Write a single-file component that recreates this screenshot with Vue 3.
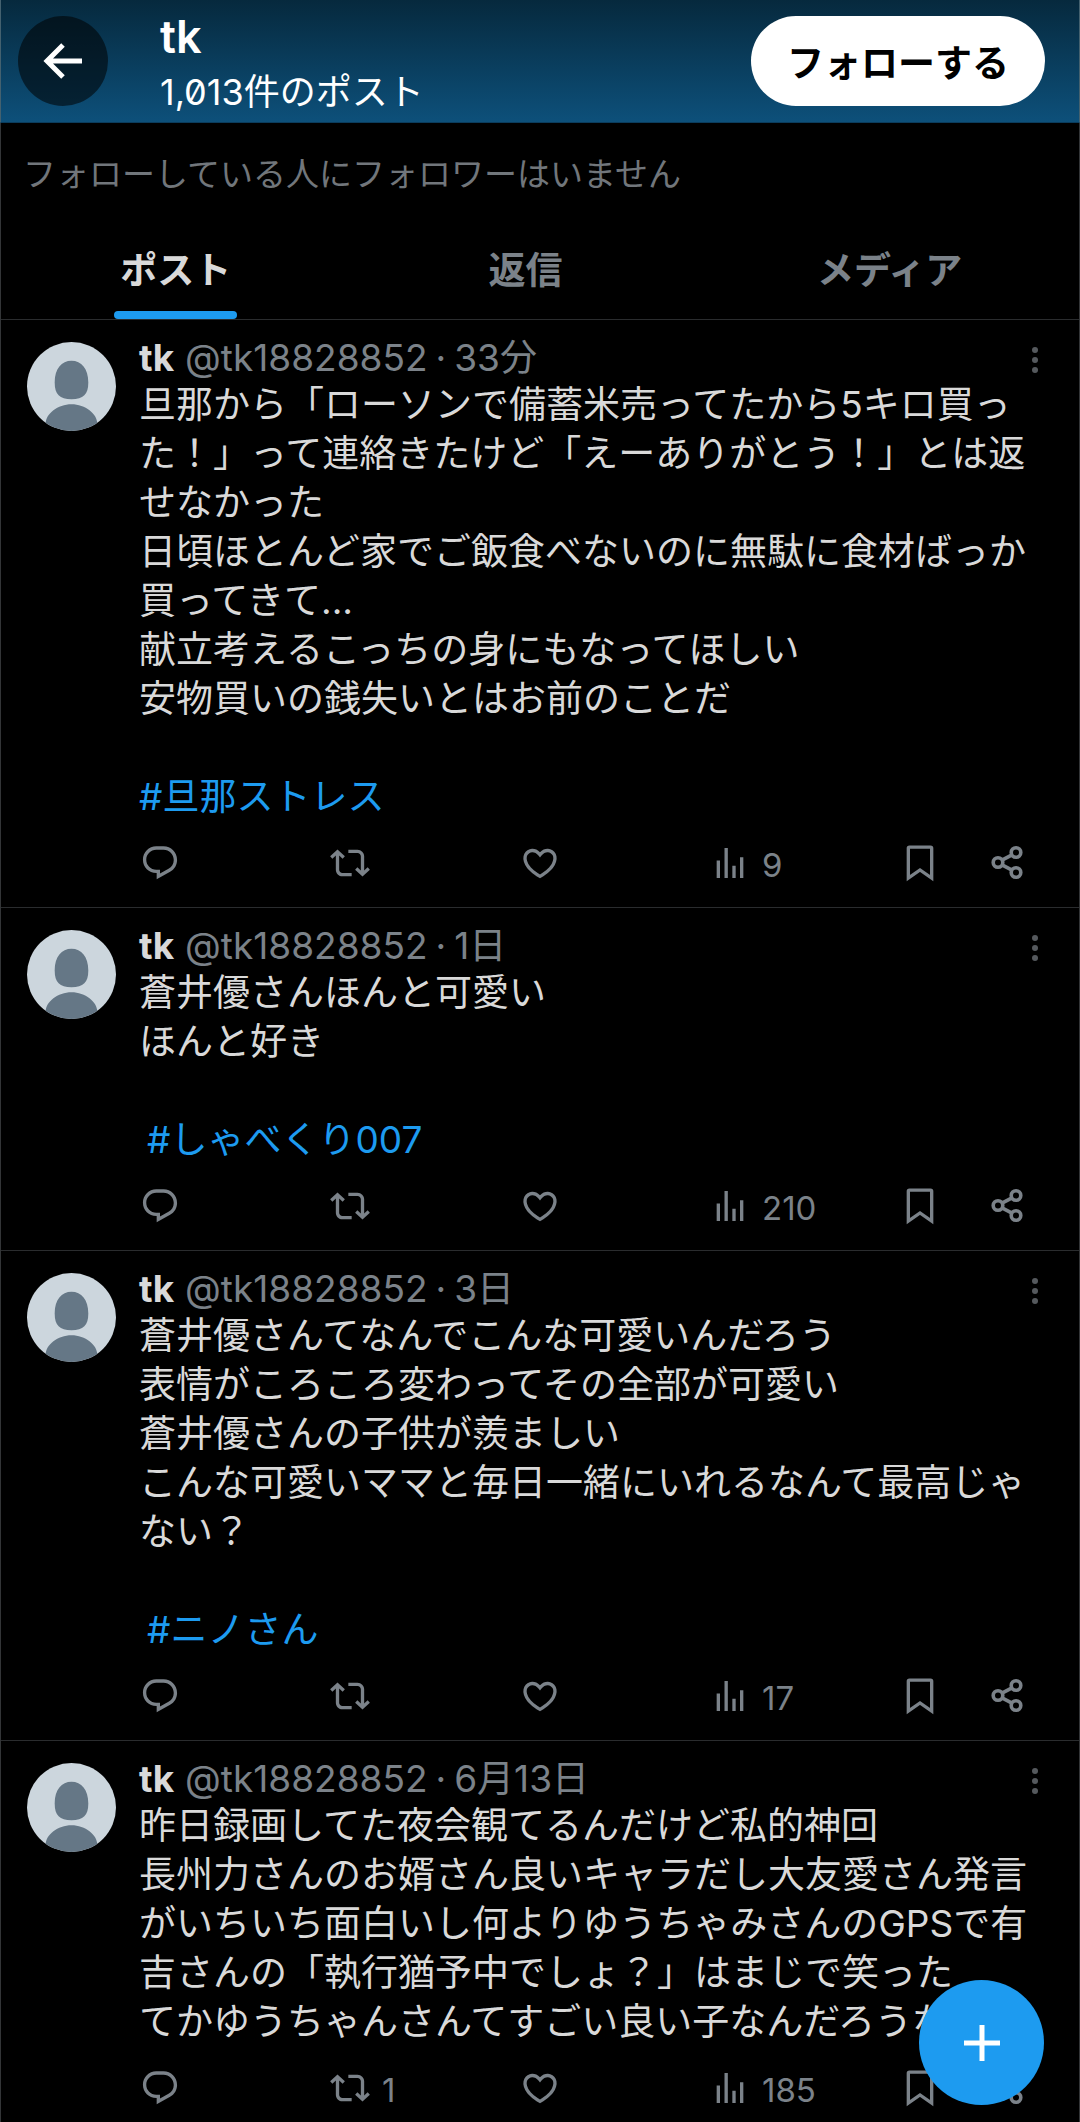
<script setup>
const tabs = [
  { label: 'ポスト', active: true },
  { label: '返信', active: false },
  { label: 'メディア', active: false },
]

const posts = [
  {
    time: '33分',
    text:
      '旦那から「ローソンで備蓄米売ってたから5キロ買った！」って連絡きたけど「えーありがとう！」とは返せなかった\n' +
      '日頃ほとんど家でご飯食べないのに無駄に食材ばっか買ってきて...\n' +
      '献立考えるこっちの身にもなってほしい\n' +
      '安物買いの銭失いとはお前のことだ\n\n',
    tag: '#旦那ストレス',
    spaced: false,
    reposts: '',
    views: '9',
  },
  {
    time: '1日',
    text: '蒼井優さんほんと可愛い\nほんと好き\n\n',
    tag: '#しゃべくり007',
    spaced: true,
    reposts: '',
    views: '210',
  },
  {
    time: '3日',
    text:
      '蒼井優さんてなんでこんな可愛いんだろう\n' +
      '表情がころころ変わってその全部が可愛い\n' +
      '蒼井優さんの子供が羨ましい\n' +
      'こんな可愛いママと毎日一緒にいれるなんて最高じゃない？\n\n',
    tag: '#ニノさん',
    spaced: true,
    reposts: '',
    views: '17',
  },
  {
    time: '6月13日',
    text:
      '昨日録画してた夜会観てるんだけど私的神回\n' +
      '長州力さんのお婿さん良いキャラだし大友愛さん発言がいちいち面白いし何よりゆうちゃみさんのGPSで有吉さんの「執行猶予中でしょ？」はまじで笑った\n' +
      'てかゆうちゃんさんてすごい良い子なんだろうな',
    tag: '',
    spaced: false,
    reposts: '1',
    views: '185',
  },
]
</script>

<template>
  <div class="page" lang="ja">
    <header class="top">
      <button class="back" type="button" aria-label="戻る">
        <svg viewBox="0 0 40 40" fill="none" stroke="currentColor" stroke-width="5">
          <path d="M39 20H4M20 4 4 20l16 16" />
        </svg>
      </button>
      <div class="who">
        <h1>tk</h1>
        <p>1,013件のポスト</p>
      </div>
      <button class="follow" type="button">フォローする</button>
    </header>

    <p class="note">フォローしている人にフォロワーはいません</p>

    <nav class="tabs">
      <a v-for="t in tabs" :key="t.label" href="#" class="tab" :class="{ active: t.active }">
        <span>{{ t.label }}</span>
      </a>
    </nav>

    <main>
      <article v-for="p in posts" :key="p.time" class="post">
        <svg class="avatar" viewBox="0 0 90 90" aria-hidden="true">
          <defs>
            <clipPath id="disc"><circle cx="45" cy="45" r="45" /></clipPath>
          </defs>
          <g clip-path="url(#disc)">
            <rect width="90" height="90" fill="#ccd6dd" />
            <path
              fill="#657786"
              d="M45 19c-10 0-17 8-17 22 0 12 5 17 17 17s17-5 17-17c0-14-7-22-17-22zM19 82c0-9 12-19 26-19s26 10 26 19v8H19z"
            />
          </g>
        </svg>
        <div class="content">
          <div class="meta">
            <a href="#" class="name">tk</a>
            <span>@tk18828852</span>
            <span>·</span>
            <span>{{ p.time }}</span>
            <button class="more" type="button" aria-label="もっと見る">
              <svg viewBox="0 0 10 28" fill="currentColor">
                <circle cx="5" cy="4" r="3" />
                <circle cx="5" cy="14" r="3" />
                <circle cx="5" cy="24" r="3" />
              </svg>
            </button>
          </div>
          <p class="text">{{ p.text }}<a v-if="p.tag" href="#" :class="{ spaced: p.spaced }">{{ p.tag }}</a></p>
          <div class="actions">
            <button class="act wide" type="button" aria-label="返信">
              <svg viewBox="0 0 24 24" fill="currentColor">
                <path d="M1.751 10c0-4.42 3.584-8 8.005-8h4.366c4.49 0 8.129 3.64 8.129 8.13 0 2.96-1.607 5.68-4.196 7.11l-8.054 4.46v-3.69h-.067c-4.49.1-8.183-3.51-8.183-8.01zm8.005-6c-3.317 0-6.005 2.69-6.005 6 0 3.37 2.77 6.08 6.138 6.01l.351-.01h1.761v2.3l5.087-2.81c1.951-1.08 3.163-3.13 3.163-5.36 0-3.39-2.744-6.13-6.129-6.13H9.756z" />
              </svg>
            </button>
            <button class="act wide" type="button" aria-label="リポスト">
              <svg viewBox="0 0 24 24" fill="currentColor">
                <path d="M4.5 3.88l4.432 4.14-1.364 1.46L5.5 7.55V16c0 1.1.896 2 2 2H13v2H7.5c-2.209 0-4-1.79-4-4V7.55L1.432 9.48.068 8.02 4.5 3.88zM16.5 6H11V4h5.5c2.209 0 4 1.79 4 4v8.45l2.068-1.93 1.364 1.46-4.432 4.14-4.432-4.14 1.364-1.46 2.068 1.93V8c0-1.1-.896-2-2-2z" />
              </svg>
              <span v-if="p.reposts" class="count">{{ p.reposts }}</span>
            </button>
            <button class="act wide" type="button" aria-label="いいね">
              <svg viewBox="0 0 24 24" fill="currentColor">
                <path d="M16.697 5.5c-1.222-.06-2.679.51-3.89 2.16l-.805 1.09-.806-1.09C9.984 6.01 8.526 5.44 7.304 5.5c-1.243.07-2.349.78-2.91 1.91-.552 1.12-.633 2.78.479 4.82 1.074 1.97 3.257 4.27 7.129 6.61 3.87-2.34 6.052-4.64 7.126-6.61 1.111-2.04 1.03-3.7.477-4.82-.561-1.13-1.666-1.84-2.908-1.91zm4.187 7.69c-1.351 2.48-4.001 5.12-8.379 7.67l-.503.3-.504-.3c-4.379-2.55-7.029-5.19-8.382-7.67-1.36-2.5-1.41-4.86-.514-6.67.887-1.79 2.647-2.91 4.601-3.01 1.651-.09 3.368.56 4.798 2.01 1.429-1.45 3.146-2.1 4.796-2.01 1.954.1 3.714 1.22 4.601 3.01.896 1.81.846 4.17-.514 6.67z" />
              </svg>
            </button>
            <button class="act wide" type="button" aria-label="表示">
              <svg viewBox="0 0 24 24" fill="currentColor">
                <path d="M4 10.500h2V21H4zM8.700 3h2v18h-2zM13.400 13.700h2V21h-2zM18 8.500h2V21h-2z" />
              </svg>
              <span class="count">{{ p.views }}</span>
            </button>
            <button class="act" type="button" aria-label="ブックマーク">
              <svg viewBox="0 0 24 24" fill="none" stroke="currentColor" stroke-width="2">
                <path d="M5 3.200Q5 2.500 5.700 2.500h12.600q.7 0 .7.700v17.800l-7-4.800-7 4.800z" />
              </svg>
            </button>
            <button class="act" type="button" aria-label="共有">
              <svg viewBox="0 0 40 40" fill="none" stroke="currentColor" stroke-width="3.600">
                <circle cx="11" cy="19.500" r="4.800" />
                <circle cx="29" cy="9.500" r="4.800" />
                <circle cx="29" cy="29.500" r="4.800" />
                <path d="M15 17.200 25 11.800M15 21.800l10 5.400" />
              </svg>
            </button>
          </div>
        </div>
      </article>
    </main>

    <button class="compose" type="button" aria-label="ポストを作成">
      <svg viewBox="0 0 36 36" stroke="currentColor" stroke-width="5">
        <path d="M18 0v36M0 18h36" />
      </svg>
    </button>
  </div>
</template>

<style>
body {
  margin: 0;
  background: #000;
}
</style>

<style scoped>
.page {
  box-sizing: border-box;
  min-height: 100vh;
  border: solid #333537;
  border-width: 0 1px;
  background: #000;
  color: #d9d9d9;
  font-family: Inter, "Noto Sans CJK JP", sans-serif;
}

h1,
p {
  margin: 0;
}

a {
  color: inherit;
  text-decoration: none;
}

button {
  padding: 0;
  border: 0;
  background: none;
  color: inherit;
  font-family: inherit;
}

svg {
  display: block;
}

.top {
  display: flex;
  align-items: center;
  height: 122px;
  margin: 0 -1px;
  padding: 0 34px 0 17px;
  border: 1px solid #44616f;
  border-width: 0 1px 1px;
  border-bottom-color: #0b3c5c;
  background: linear-gradient(#06293d, #0d507a);
  color: #fff;
}

.back {
  display: grid;
  place-items: center;
  width: 90px;
  height: 90px;
  border-radius: 50%;
  background: rgba(0, 0, 0, 0.55);
}

.back svg {
  width: 40px;
  height: 40px;
}

.who {
  flex: 1;
  margin-left: 52px;
  padding-top: 8px;
}

h1 {
  font-size: 45px;
  font-weight: 600;
  line-height: 54px;
}

.who p {
  font-size: 36px;
  line-height: 56px;
  font-feature-settings: "zero";
}

.follow {
  height: 90px;
  padding: 0 36px;
  border-radius: 45px;
  background: #fff;
  color: #000;
  font-size: 37px;
  font-weight: 700;
}

.note {
  padding: 27px 22px 24px;
  color: #71767b;
  font-size: 33px;
  line-height: 48px;
}

.tabs {
  display: grid;
  grid-template-columns: 12fr 12fr 13fr;
  height: 97px;
  border-bottom: 1px solid #2a2c2e;
}

.tab {
  display: flex;
  justify-content: center;
  color: #7b8289;
  font-size: 37px;
  font-weight: 700;
  line-height: 97px;
}

.tab span {
  position: relative;
  padding: 0 6px;
}

.tab.active {
  color: #d9d9d9;
}

.tab.active span::after {
  content: "";
  position: absolute;
  right: 0;
  bottom: 0;
  left: 0;
  height: 8px;
  border-radius: 4px;
  background: #1d9bf0;
}

.post {
  display: flex;
  gap: 23px;
  padding: 19px 39px 24px 26px;
  border-bottom: 1px solid #2a2c2e;
}

.post:last-child {
  padding-bottom: 15px;
  border-bottom: 0;
}

.avatar {
  flex: none;
  width: 89px;
  height: 89px;
  margin-top: 3px;
}

.content {
  flex: 1;
  min-width: 0;
}

.meta {
  display: flex;
  align-items: center;
  gap: 8px;
  height: 37px;
  margin-bottom: 4px;
  color: #7b8289;
  font-size: 37px;
  line-height: 37px;
  white-space: nowrap;
}

.name {
  margin-right: 3px;
  color: #d9d9d9;
  font-weight: 700;
}

.more {
  margin-left: auto;
  padding-top: 4px;
  color: #55595d;
}

.more svg {
  width: 10px;
  height: 28px;
}

.text {
  font-size: 37px;
  line-height: 49px;
  white-space: pre-wrap;
}

.text a {
  color: #1d9bf0;
}

.text .spaced {
  margin-left: 8px;
}

.actions {
  display: flex;
  align-items: center;
  margin-top: 22px;
  padding: 0 13px 0 1px;
  color: #7b8289;
}

.act {
  display: flex;
  align-items: center;
  gap: 12px;
  height: 40px;
}

.act.wide {
  flex: 1;
}

.act + .act:last-child {
  margin-left: 47px;
}

.act svg {
  flex: none;
  width: 40px;
  height: 40px;
}

.count {
  padding-top: 3px;
  font-size: 33px;
  line-height: 36px;
}

.compose {
  position: fixed;
  right: 36px;
  bottom: 17px;
  display: grid;
  place-items: center;
  width: 125px;
  height: 125px;
  border-radius: 50%;
  background: #1d9bf0;
  color: #fff;
}

.compose svg {
  width: 36px;
  height: 36px;
}
</style>
